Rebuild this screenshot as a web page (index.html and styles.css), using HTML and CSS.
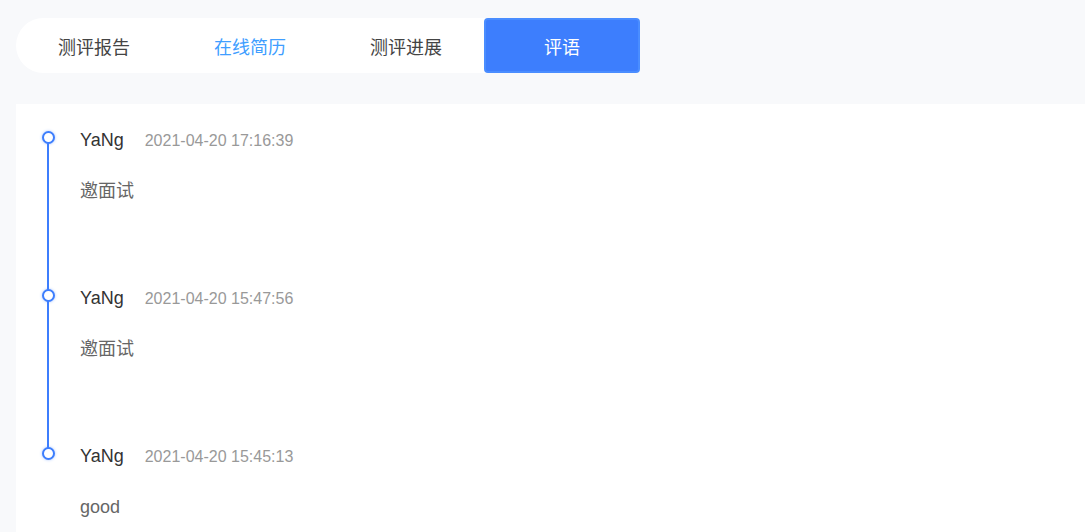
FILE: index.html
```html
<!DOCTYPE html>
<html lang="zh-CN">
<head>
    <meta charset="UTF-8">
    <meta name="viewport" content="width=device-width, initial-scale=1.0">
    <title>评语</title>
    <link rel="stylesheet" href="styles.css">
</head>
<body>
    <div class="page">
        <div class="tabs">
            <div class="tab">测评报告</div>
            <div class="tab tab-link">在线简历</div>
            <div class="tab">测评进展</div>
            <div class="tab tab-active">评语</div>
        </div>

        <div class="panel">
            <div class="item">
                <span class="dot"></span>
                <div class="item-head">
                    <span class="name">YaNg</span>
                    <span class="time">2021-04-20 17:16:39</span>
                </div>
                <div class="item-text">邀面试</div>
            </div>
            <div class="item">
                <span class="dot"></span>
                <div class="item-head">
                    <span class="name">YaNg</span>
                    <span class="time">2021-04-20 15:47:56</span>
                </div>
                <div class="item-text">邀面试</div>
            </div>
            <div class="item">
                <span class="dot"></span>
                <div class="item-head">
                    <span class="name">YaNg</span>
                    <span class="time">2021-04-20 15:45:13</span>
                </div>
                <div class="item-text">good</div>
            </div>
        </div>
    </div>
</body>
</html>
```

FILE: styles.css
```css
body {
    font-family: "Liberation Sans", "Noto Sans CJK SC", sans-serif;
    background-color: #f8f9fb;
    color: #333;
    margin: 0;
    padding: 0;
    overflow: hidden;
}
.page {
    padding: 18px 0 0 16px;
}
.tabs {
    display: inline-flex;
    height: 55px;
    background: #ffffff;
    border-radius: 28px 4px 4px 28px;
}
.tab {
    width: 156px;
    display: flex;
    align-items: center;
    justify-content: center;
    font-size: 18px;
    color: #444;
    box-sizing: border-box;
}
.tab-link {
    color: #409eff;
}
.tab-active {
    background: #3d7efd;
    border: 2px solid #4a8dff;
    border-radius: 4px;
    color: #fff;
}
.panel {
    margin-top: 31px;
    background: #ffffff;
    padding-top: 24px;
    min-height: 420px;
}
.item {
    position: relative;
    padding: 0 0 83px 64px;
}
.item::before {
    content: "";
    position: absolute;
    left: 31px;
    top: 9px;
    bottom: -9px;
    width: 2px;
    background: #3d7efd;
}
.item:last-child::before {
    display: none;
}
.dot {
    position: absolute;
    left: 26px;
    top: 3px;
    width: 9px;
    height: 9px;
    border: 2px solid #3d7efd;
    border-radius: 50%;
    background: #fff;
    box-shadow: 0 0 3px rgba(61, 126, 253, 0.45);
    z-index: 1;
}
.item-head {
    display: flex;
    align-items: baseline;
    line-height: 24px;
}
.name {
    font-size: 18px;
    color: #333;
}
.time {
    margin-left: 21px;
    font-size: 16px;
    color: #999;
}
.item-text {
    margin-top: 26px;
    font-size: 18px;
    line-height: 24px;
    color: #666;
}
```
